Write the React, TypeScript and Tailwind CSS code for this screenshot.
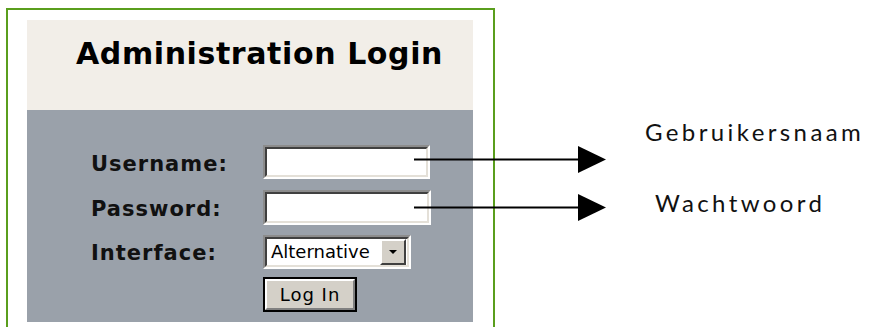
import React from "react";

const verdana = "font-['DejaVu_Sans',Verdana,sans-serif]";
const label = `${verdana} text-[21px] font-bold leading-[21px] tracking-[1px] text-[#111]`;

function Sunken({ className, children }: { className: string; children?: React.ReactNode }) {
  return (
    <div
      className={`${className} border-2 border-t-[#8c8c8c] border-l-[#8c8c8c] border-b-[#ffffff] border-r-[#ffffff]`}
    >
      <div className="h-full w-full border-2 border-t-[#404040] border-l-[#404040] border-b-[#e4e0d8] border-r-[#e4e0d8] bg-white">
        {children}
      </div>
    </div>
  );
}

function Arrows() {
  return (
    <svg
      className="pointer-events-none absolute left-0 top-0"
      width="871"
      height="327"
      viewBox="0 0 871 327"
    >
      <line x1="414" y1="159.5" x2="580" y2="159.5" stroke="#000" strokeWidth="2" />
      <polygon points="578,146 606,159.5 578,173" fill="#000" />
      <line x1="414" y1="207.5" x2="580" y2="207.5" stroke="#000" strokeWidth="2" />
      <polygon points="578,194 606,207.5 578,221" fill="#000" />
    </svg>
  );
}

export default function App() {
  return (
    <div className="relative flex h-[327px] w-[871px] overflow-hidden bg-white">
      <div className="ml-[6px] mt-[8px] h-[319px] w-[489px] border-2 border-b-0 border-[#5a9e1d] pl-[19px] pt-[10px]">
        <div className="w-[446px]">
          <div className="h-[90px] bg-[#f2eee8] pl-[49px] pt-[19px]">
            <h1 className={`${verdana} text-[30px] font-bold leading-[30px] tracking-[0.6px] text-black`}>
              Administration Login
            </h1>
          </div>
          <div className="h-[212px] bg-[#9aa1aa] pl-[64px] pt-[35px]">
            <div className="grid grid-cols-[172px_1fr] items-center">
              <label className={`${label} pt-[4px]`}>Username:</label>
              <Sunken className="h-[34px] w-[167px]" />

              <label className={`${label} mt-[11px] pt-[4px]`}>Password:</label>
              <Sunken className="mt-[11px] h-[35px] w-[168px]" />

              <label className={`${label} mt-[10px] pt-[2px]`}>Interface:</label>
              <Sunken className="mt-[10px] h-[34px] w-[148px]">
                <div className="flex h-full items-center justify-between pl-[4px] pr-[1px]">
                  <span className={`${verdana} text-[18px] leading-none text-black`}>Alternative</span>
                  <div className="flex h-[26px] w-[26px] items-center justify-center border-2 border-t-[#ffffff] border-l-[#ffffff] border-b-[#404040] border-r-[#404040] bg-[#d4d0c8]">
                    <div className="h-0 w-0 border-l-[4px] border-r-[4px] border-t-[4px] border-l-transparent border-r-transparent border-t-black" />
                  </div>
                </div>
              </Sunken>

              <div />
              <button
                className={`${verdana} mt-[8px] h-[35px] w-[94px] border-2 border-black bg-[#d4d0c8] text-[18px] leading-none tracking-[1px] text-black`}
              >
                <div className="flex h-full w-full items-center justify-center border-2 border-t-[#ffffff] border-l-[#ffffff] border-b-[#808080] border-r-[#808080]">
                  Log In
                </div>
              </button>
            </div>
          </div>
        </div>
      </div>

      <div className="flex flex-col pl-[150px] pt-[120px] font-['Lato',sans-serif] text-[24px] leading-[24px] tracking-[3.4px] text-[#111]">
        <span>Gebruikersnaam</span>
        <span className="mt-[47px] pl-[10px]">Wachtwoord</span>
      </div>

      <Arrows />
    </div>
  );
}
